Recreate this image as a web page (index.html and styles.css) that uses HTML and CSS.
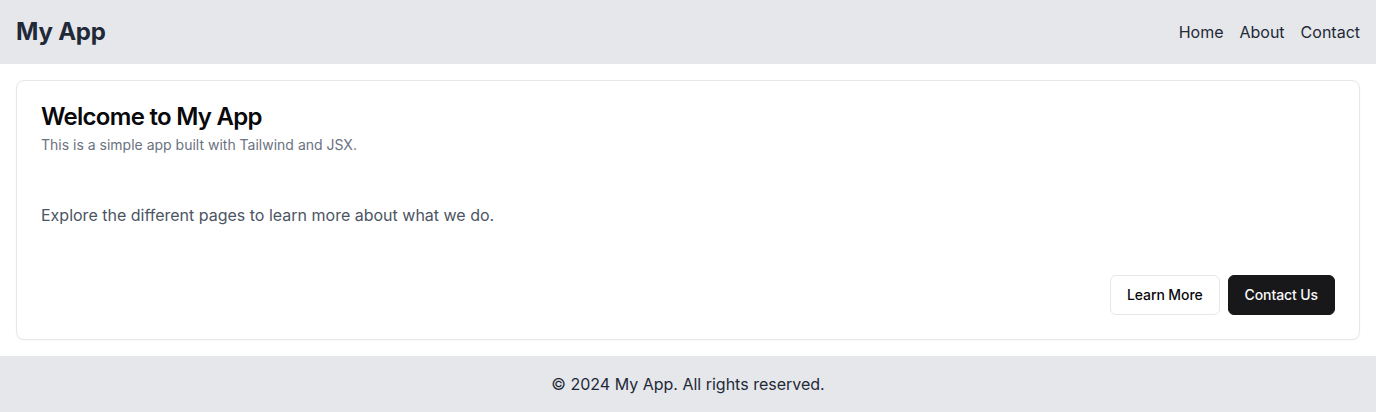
FILE: index.html
```html
<!DOCTYPE html>
<html lang="en">
<head>
<meta charset="utf-8">
<title>My App</title>
<link rel="stylesheet" href="styles.css">
</head>
<body>
<div class="page">
  <header class="header">
    <h1 class="brand">My App</h1>
    <nav class="nav">
      <a href="#">Home</a>
      <a href="#">About</a>
      <a href="#">Contact</a>
    </nav>
  </header>
  <main class="main">
    <div class="card">
      <div class="card-header">
        <h2 class="card-title">Welcome to My App</h2>
        <p class="card-desc">This is a simple app built with Tailwind and JSX.</p>
      </div>
      <div class="card-content">
        <p>Explore the different pages to learn more about what we do.</p>
      </div>
      <div class="card-footer">
        <button class="btn btn-outline">Learn More</button>
        <button class="btn btn-dark">Contact Us</button>
      </div>
    </div>
  </main>
  <footer class="footer">© 2024 My App. All rights reserved.</footer>
</div>
</body>
</html>
```
FILE: styles.css
```css
* { box-sizing: border-box; }
html, body { margin: 0; padding: 0; }
body {
  font-family: Inter, "Noto Sans", sans-serif;
  background: #ffffff;
  color: #111827;
}
.page { display: flex; flex-direction: column; min-height: 412px; }
.header {
  background: #e5e7eb;
  height: 64px;
  padding: 0 16px;
  display: flex;
  align-items: center;
  justify-content: space-between;
}
.brand {
  margin: 0;
  font-size: 24px;
  line-height: 32px;
  font-weight: 700;
  letter-spacing: -0.2px;
  color: #1f2937;
}
.nav { display: flex; gap: 16px; }
.nav a {
  color: #1f2937;
  text-decoration: none;
  font-size: 16px;
  line-height: 24px;
}
.main { padding: 16px; flex: 1; }
.card {
  border: 1px solid #e5e7eb;
  border-radius: 8px;
  background: #fff;
  box-shadow: 0 1px 2px rgba(0,0,0,0.03);
}
.card-header {
  padding: 24px;
  display: flex;
  flex-direction: column;
  gap: 6px;
}
.card-title {
  margin: 0;
  font-size: 24px;
  line-height: 24px;
  font-weight: 600;
  letter-spacing: -0.72px;
  color: #09090b;
}
.card-desc {
  margin: 0;
  font-size: 14px;
  line-height: 20px;
  color: #6b7280;
}
.card-content { padding: 24px; }
.card-content p {
  margin: 0;
  font-size: 16px;
  line-height: 24px;
  color: #4b5563;
}
.card-footer {
  padding: 24px;
  display: flex;
  justify-content: flex-end;
  gap: 8px;
}
.btn {
  height: 40px;
  padding: 0 16px;
  border-radius: 6px;
  font-family: inherit;
  font-size: 14px;
  line-height: 20px;
  font-weight: 500;
  letter-spacing: -0.1px;
  cursor: pointer;
}
.btn-outline {
  background: #fff;
  border: 1px solid #e5e7eb;
  color: #09090b;
}
.btn-dark {
  background: #18181b;
  border: 1px solid #18181b;
  color: #fafafa;
}
.footer {
  background: #e5e7eb;
  padding: 16px;
  text-align: center;
  font-size: 16px;
  line-height: 24px;
  color: #1f2937;
}
```
